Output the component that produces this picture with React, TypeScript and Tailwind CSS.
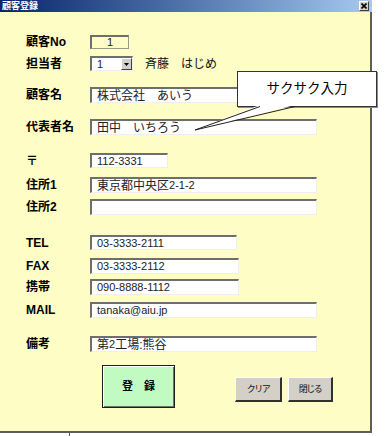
import React from "react";

const sunken =
  "flex items-center bg-white border-t-2 border-l-2 border-b border-r border-t-[#6e6e6e] border-l-[#6e6e6e] border-b-[#efefef] border-r-[#efefef] pl-[5px] text-[#222] leading-none";

function Label({ children, cls = "" }: { children: React.ReactNode; cls?: string }) {
  return (
    <div className={`w-[64px] shrink-0 font-bold text-[12px] text-black leading-none ${cls}`}>
      {children}
    </div>
  );
}

export default function App() {
  return (
    <div className="w-[387px] h-[436px] bg-white overflow-hidden font-['Liberation_Sans','Noto_Sans_CJK_JP',sans-serif]">
      <div className="w-[372px] h-[433px] flex flex-col">
        {/* title bar */}
        <div className="h-[12px] shrink-0 flex items-center justify-between bg-linear-to-r from-[#0a246a] to-[#a6caf0] pl-[2px] pr-[3px]">
          <span className="text-white font-bold text-[9px] leading-none">顧客登録</span>
          <div className="w-[10px] h-[10px] bg-[#d4d0c8] border-t border-l border-t-white border-l-white border-b border-r border-b-[#404040] border-r-[#404040] flex items-center justify-center">
            <svg width="6" height="6" viewBox="0 0 6 6">
              <path d="M0.5 0.5 L5.5 5.5 M5.5 0.5 L0.5 5.5" stroke="#000" strokeWidth="1.6" />
            </svg>
          </div>
        </div>

        {/* body */}
        <div className="relative flex-1 flex flex-col bg-[#fffdc6] border-r-2 border-b-2 border-r-[#5e5e58] border-b-[#5e5e58] pl-[26px]">
          {/* 顧客No */}
          <div className="flex items-center mt-[23px] h-[14px]">
            <Label>顧客No</Label>
            <div className="w-[39px] h-[14px] flex items-center justify-center bg-[#fffdc6] border-t-2 border-l-2 border-b border-r border-t-[#6e6e6e] border-l-[#6e6e6e] border-b-[#9a9a8a] border-r-[#9a9a8a] text-[11px] text-[#222] leading-none">
              1
            </div>
          </div>

          {/* 担当者 */}
          <div className="flex items-center mt-[7px] h-[15px]">
            <Label>担当者</Label>
            <div className={`${sunken} w-[43px] h-[15px] justify-between pr-0 text-[11px]`}>
              <span>1</span>
              <div className="w-[11px] h-[12px] bg-[#d4d0c8] border-t border-l border-t-white border-l-white border-b border-r border-b-[#404040] border-r-[#404040] flex items-center justify-center">
                <svg width="5" height="3" viewBox="0 0 5 3">
                  <path d="M0 0 H5 L2.5 3 Z" fill="#000" />
                </svg>
              </div>
            </div>
            <span className="ml-[12px] text-[12px] text-[#111] leading-none">斉藤　はじめ</span>
          </div>

          {/* 顧客名 */}
          <div className="flex items-center mt-[16px] h-[16px]">
            <Label>顧客名</Label>
            <div className={`${sunken} w-[227px] h-[16px] text-[12px]`}>株式会社　あいう</div>
          </div>

          {/* 代表者名 */}
          <div className="flex items-center mt-[16px] h-[16px]">
            <Label>代表者名</Label>
            <div className={`${sunken} w-[227px] h-[16px] text-[12px]`}>田中　いちろう</div>
          </div>

          {/* 〒 */}
          <div className="flex items-center mt-[18px] h-[15px]">
            <Label cls="text-[10px]">〒</Label>
            <div className={`${sunken} w-[78px] h-[15px] text-[11px]`}>112-3331</div>
          </div>

          {/* 住所1 */}
          <div className="flex items-center mt-[9px] h-[16px]">
            <Label>住所1</Label>
            <div className={`${sunken} w-[227px] h-[16px] text-[12px]`}>
              東京都中央区<span className="text-[11px]">2-1-2</span>
            </div>
          </div>

          {/* 住所2 */}
          <div className="flex items-center mt-[6px] h-[16px]">
            <Label>住所2</Label>
            <div className={`${sunken} w-[227px] h-[16px] text-[12px]`}></div>
          </div>

          {/* TEL */}
          <div className="flex items-center mt-[20px] h-[15px]">
            <Label cls="text-[10.5px]">TEL</Label>
            <div className={`${sunken} w-[147px] h-[15px] text-[11px]`}>03-3333-2111</div>
          </div>

          {/* FAX */}
          <div className="flex items-center mt-[8px] h-[16px]">
            <Label cls="text-[10.5px]">FAX</Label>
            <div className={`${sunken} w-[149px] h-[16px] text-[11px]`}>03-3333-2112</div>
          </div>

          {/* 携帯 */}
          <div className="flex items-center mt-[5px] h-[16px]">
            <Label>携帯</Label>
            <div className={`${sunken} w-[149px] h-[16px] text-[11px]`}>090-8888-1112</div>
          </div>

          {/* MAIL */}
          <div className="flex items-center mt-[7px] h-[16px]">
            <Label cls="text-[10.5px]">MAIL</Label>
            <div className={`${sunken} w-[227px] h-[16px] text-[11px]`}>tanaka@aiu.jp</div>
          </div>

          {/* 備考 */}
          <div className="flex items-center mt-[18px] h-[16px]">
            <Label>備考</Label>
            <div className={`${sunken} w-[227px] h-[16px] text-[12px]`}>
              第<span className="text-[11px]">2</span>工場:熊谷
            </div>
          </div>

          {/* buttons */}
          <div className="flex items-start mt-[13px]">
            <div className="ml-[76px] w-[73px] h-[43px] flex items-center justify-center bg-[#c2fbc2] border border-[#1e1e1e] shadow-[inset_1px_1px_0_#ffffff,inset_-1px_-1px_0_#707070] font-bold text-[11px] text-black leading-none">
              登　録
            </div>
            <div className="ml-[60px] mt-[12px] w-[47px] h-[25px] flex items-center justify-center bg-[#d4d0c8] border-t border-l border-t-white border-l-white border-b-2 border-r-2 border-b-[#303030] border-r-[#303030] text-[9px] tracking-[-1.5px] text-[#111] leading-none">
              クリア
            </div>
            <div className="ml-[6px] mt-[12px] w-[45px] h-[25px] flex items-center justify-center bg-[#d4d0c8] border-t border-l border-t-white border-l-white border-b-2 border-r-2 border-b-[#303030] border-r-[#303030] text-[9px] tracking-[-1.5px] text-[#111] leading-none">
              閉じる
            </div>
          </div>

          {/* callout */}
          <div className="absolute left-[237px] top-[59px] w-[140px] h-[36px] bg-white border border-[#333] shadow-[1px_1px_0_#8a8a8a] flex items-center justify-center text-[13.5px] text-black leading-none z-10">
            サクサク入力
          </div>
          <svg
            className="absolute left-[190px] top-[93px] z-20"
            width="110"
            height="30"
            viewBox="0 0 110 30"
          >
            <polygon points="70,0 105,0 5,25" fill="#fff" />
            <polyline points="70,1.5 5,25 105,1.5" fill="none" stroke="#222" strokeWidth="1" />
          </svg>
        </div>
      </div>
      <div className="ml-[69px] w-px h-[3px] bg-[#555]" />
    </div>
  );
}
